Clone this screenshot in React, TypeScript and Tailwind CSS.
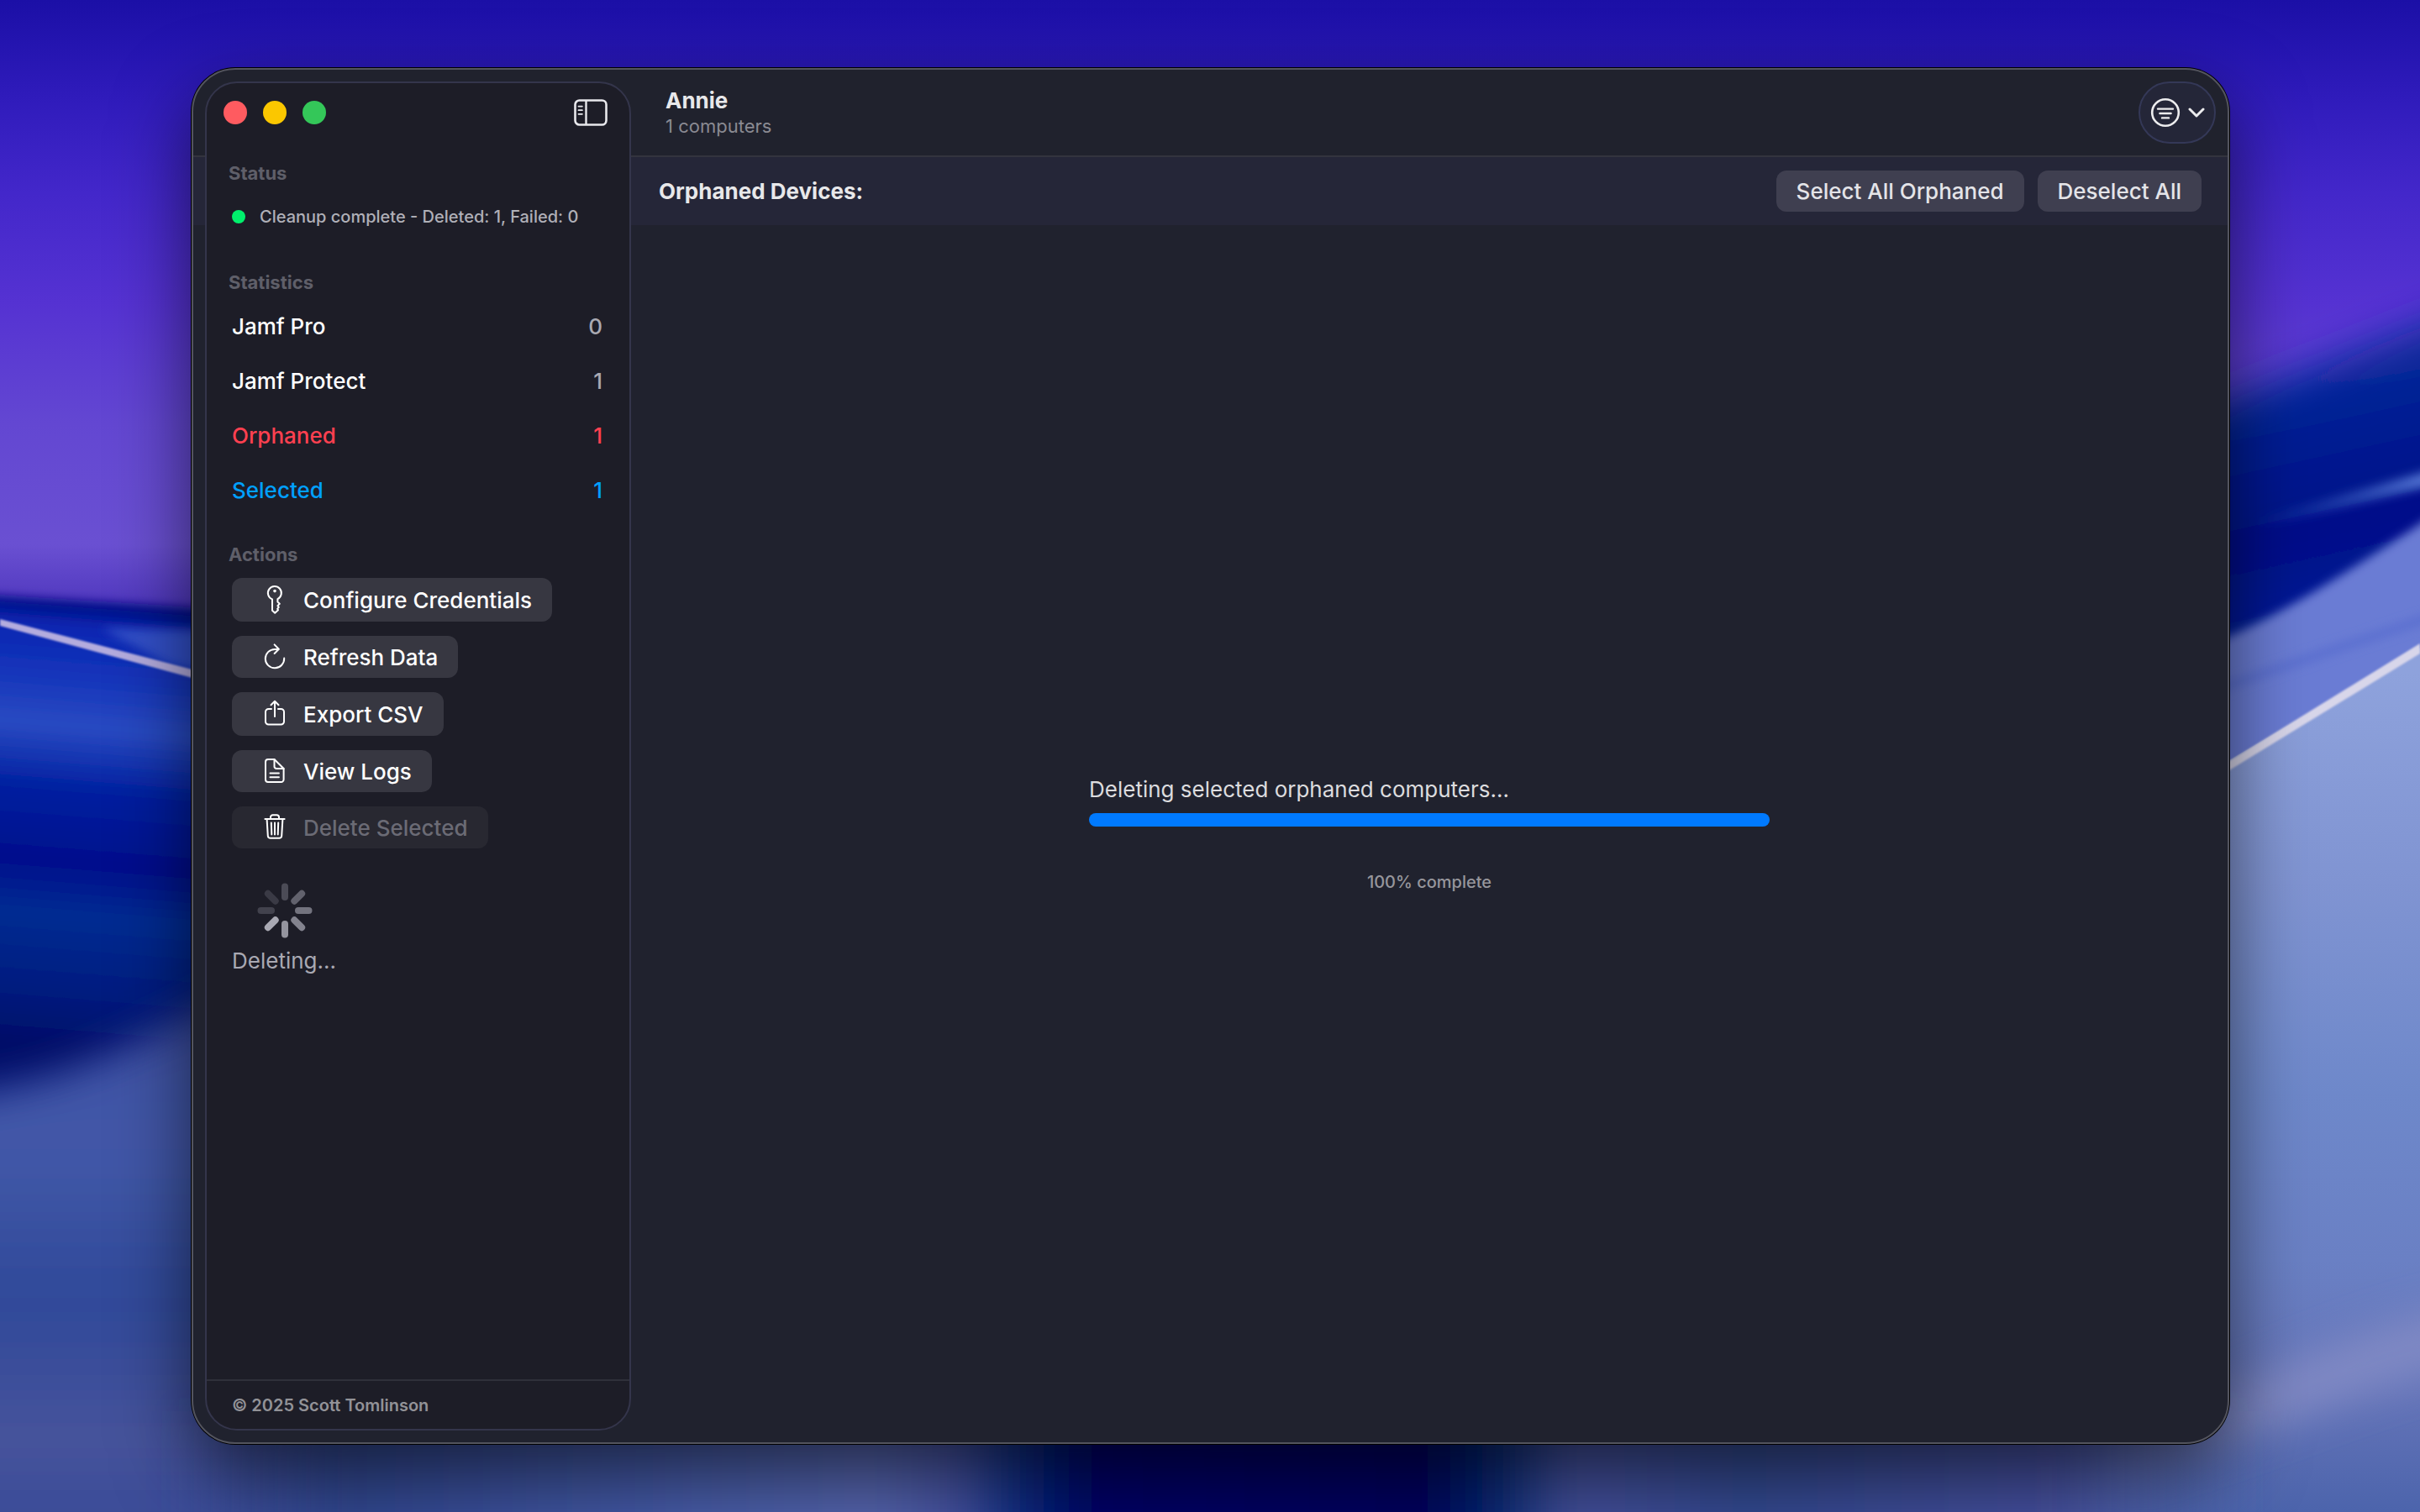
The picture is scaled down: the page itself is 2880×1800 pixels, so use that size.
import React from "react";

interface Stat {
  label: string;
  value: number;
  labelClass: string;
  valueClass: string;
}

interface Action {
  label: string;
  icon: React.ReactNode;
  sizeClass: string;
  disabled?: boolean;
}

const STATS: Stat[] = [
  { label: "Jamf Pro", value: 0, labelClass: "text-white", valueClass: "text-[#a9a9b2]" },
  { label: "Jamf Protect", value: 1, labelClass: "text-white", valueClass: "text-[#a9a9b2]" },
  { label: "Orphaned", value: 1, labelClass: "text-[#ff4050]", valueClass: "text-[#ff4050]" },
  { label: "Selected", value: 1, labelClass: "text-[#00a0ff]", valueClass: "text-[#00a0ff]" },
];

const iconProps = {
  width: 36,
  height: 36,
  viewBox: "0 0 36 36",
  fill: "none",
  stroke: "currentColor",
  strokeWidth: 2,
  strokeLinecap: "round" as const,
  strokeLinejoin: "round" as const,
  "aria-hidden": true,
};

const KeyIcon = () => (
  <svg {...iconProps}>
    <path d="M15 17.400a8 8 0 1 1 6.400-.3v3.400l2.400 2.200-2.400 2.400 1.400 1.800-1.600 1.800.8 1.600-3.800 3.400-3.200-3z" />
    <circle cx="18" cy="7.600" r="1.800" fill="currentColor" stroke="none" />
  </svg>
);

const RefreshIcon = () => (
  <svg {...iconProps}>
    <path d="M22.400 8.900H18.200A11.200 11.200 0 1 0 29.200 19.600" />
    <path d="M17.600 3.400l5.200 5.400-5.200 5.200" />
  </svg>
);

const ShareIcon = () => (
  <svg {...iconProps}>
    <path d="M14 12h-3.400a3.600 3.600 0 0 0-3.600 3.600v11.400a3.600 3.600 0 0 0 3.600 3.600h14.800a3.600 3.600 0 0 0 3.600-3.600V15.600a3.600 3.600 0 0 0-3.600-3.600H22" />
    <path d="M18 21V3M13.500 7.300L18 2.800l4.500 4.500" />
  </svg>
);

const DocIcon = () => (
  <svg {...iconProps}>
    <path d="M17.500 4H10a3 3 0 0 0-3 3v21a3 3 0 0 0 3 3h15.600a3 3 0 0 0 3-3V15z" />
    <path d="M17.500 4v8.400a2.600 2.600 0 0 0 2.600 2.600h8.500M12.500 20.400h10.400M12.500 25.200h10.400" />
  </svg>
);

const TrashIcon = () => (
  <svg {...iconProps}>
    <path d="M6.400 8h23.200M13 7.800V5.800a2.600 2.600 0 0 1 2.600-2.600h4.800A2.600 2.600 0 0 1 23 5.800v2" />
    <path d="M8.600 8.200l1.200 19.800a3 3 0 0 0 3 2.800h10.400a3 3 0 0 0 3-2.800l1.200-19.800" />
    <path d="M13.800 12.400l.5 14M18 12.400v14M22.200 12.400l-.5 14" />
  </svg>
);

const SidebarIcon = () => (
  <svg width="40" height="32" viewBox="0 0 40 32" fill="none" stroke="currentColor" aria-hidden="true">
    <rect x="1.500" y="1.500" width="37" height="29" rx="5" strokeWidth="2.600" />
    <path d="M14.500 2v28" strokeWidth="2.400" />
    <path d="M5.500 8.600h4.400M5.500 13.200h4.400M5.500 17.800h4.400" strokeWidth="1.800" strokeLinecap="round" />
  </svg>
);

const FilterIcon = () => (
  <svg width="36" height="36" viewBox="0 0 36 36" fill="none" stroke="currentColor" strokeLinecap="round" aria-hidden="true">
    <circle cx="18" cy="18" r="15.800" strokeWidth="2.600" />
    <path d="M9 13.600h18M11.400 19h13.200M14 24.400h8" strokeWidth="2.400" />
  </svg>
);

const ChevronIcon = () => (
  <svg width="20" height="12" viewBox="0 0 20 12" fill="none" stroke="currentColor" strokeWidth="3" strokeLinecap="round" strokeLinejoin="round" aria-hidden="true">
    <path d="M2 2l8 8 8-8" />
  </svg>
);

const BLADES = ["#4b4b56", "#62626d", "#73737e", "#83838e", "#94949e", "#a9a9b3", "#42424d", "#3a3a45"];

const Spinner = () => (
  <svg width="66" height="68" viewBox="0 0 66 68" role="img" aria-label="Deleting">
    {BLADES.map((color, i) => (
      <rect key={i} x="29" y="1.500" width="8" height="20.500" rx="4" fill={color} transform={`rotate(${i * 45} 33 34)`} />
    ))}
  </svg>
);

const ACTIONS: Action[] = [
  { label: "Configure Credentials", icon: <KeyIcon />, sizeClass: "h-[52px]" },
  { label: "Refresh Data", icon: <RefreshIcon />, sizeClass: "h-[50px]" },
  { label: "Export CSV", icon: <ShareIcon />, sizeClass: "h-[52px]" },
  { label: "View Logs", icon: <DocIcon />, sizeClass: "h-[50px]" },
  { label: "Delete Selected", icon: <TrashIcon />, sizeClass: "h-[50px]", disabled: true },
];

const Wallpaper = () => (
  <svg
    className="absolute inset-0 h-full w-full"
    viewBox="0 0 2880 1800"
    preserveAspectRatio="none"
    aria-hidden="true"
  >
    <defs>
      <linearGradient id="sky" x1="0" y1="0" x2="0" y2="720" gradientUnits="userSpaceOnUse">
        <stop offset="0" stopColor="#1b0fa6" />
        <stop offset="0.16" stopColor="#2f1bbb" />
        <stop offset="0.32" stopColor="#4327ca" />
        <stop offset="0.5" stopColor="#5532d2" />
        <stop offset="0.7" stopColor="#6347d2" />
        <stop offset="0.9" stopColor="#6a50d2" />
        <stop offset="1" stopColor="#5038be" />
      </linearGradient>
      <linearGradient id="leftSea" x1="20" y1="710" x2="-30" y2="1330" gradientUnits="userSpaceOnUse">
        <stop offset="0" stopColor="#000c80" />
        <stop offset="0.05" stopColor="#0a26b2" />
        <stop offset="0.14" stopColor="#1434ba" />
        <stop offset="0.24" stopColor="#2a4ac2" />
        <stop offset="0.36" stopColor="#0020a0" />
        <stop offset="0.5" stopColor="#000e8c" />
        <stop offset="0.6" stopColor="#042c92" />
        <stop offset="0.74" stopColor="#001c80" />
        <stop offset="0.86" stopColor="#000c66" />
        <stop offset="1" stopColor="#001070" />
      </linearGradient>
      <linearGradient id="leftLow" x1="0" y1="1200" x2="0" y2="1800" gradientUnits="userSpaceOnUse">
        <stop offset="0" stopColor="#3f50a4" />
        <stop offset="0.28" stopColor="#4258a8" />
        <stop offset="0.58" stopColor="#2f4999" />
        <stop offset="0.86" stopColor="#47539b" />
        <stop offset="1" stopColor="#3a4c98" />
      </linearGradient>
      <linearGradient id="rightSea" x1="2700" y1="400" x2="2770" y2="720" gradientUnits="userSpaceOnUse">
        <stop offset="0" stopColor="#1034a0" />
        <stop offset="0.4" stopColor="#001c92" />
        <stop offset="0.75" stopColor="#000e88" />
        <stop offset="1" stopColor="#001a96" />
      </linearGradient>
      <linearGradient id="streak" x1="2680" y1="0" x2="2880" y2="0" gradientUnits="userSpaceOnUse">
        <stop offset="0" stopColor="#2448b4" stopOpacity="0" />
        <stop offset="1" stopColor="#5070d0" />
      </linearGradient>
      <linearGradient id="rightLow" x1="0" y1="800" x2="0" y2="1800" gradientUnits="userSpaceOnUse">
        <stop offset="0" stopColor="#8ea2dc" />
        <stop offset="0.25" stopColor="#8094d2" />
        <stop offset="0.5" stopColor="#6e88ca" />
        <stop offset="0.7" stopColor="#6a80c4" />
        <stop offset="0.86" stopColor="#6474b8" />
        <stop offset="1" stopColor="#4c64ac" />
      </linearGradient>
      <linearGradient id="bottom" x1="0" y1="0" x2="2880" y2="0" gradientUnits="userSpaceOnUse">
        <stop offset="0.07" stopColor="#3a4e9c" stopOpacity="0" />
        <stop offset="0.14" stopColor="#30468f" />
        <stop offset="0.28" stopColor="#455aa6" />
        <stop offset="0.36" stopColor="#5464ac" />
        <stop offset="0.395" stopColor="#44509e" />
        <stop offset="0.42" stopColor="#0a2c80" />
        <stop offset="0.45" stopColor="#000566" />
        <stop offset="0.59" stopColor="#00045c" />
        <stop offset="0.62" stopColor="#082a74" />
        <stop offset="0.65" stopColor="#44509a" />
        <stop offset="0.72" stopColor="#32488f" />
        <stop offset="0.85" stopColor="#454f9c" />
        <stop offset="0.93" stopColor="#4c64ac" stopOpacity="0" />
      </linearGradient>
      <filter id="soft" x="-20%" y="-20%" width="140%" height="140%">
        <feGaussianBlur stdDeviation="24" />
      </filter>
      <filter id="edge" x="-20%" y="-20%" width="140%" height="140%">
        <feGaussianBlur stdDeviation="6" />
      </filter>
      <filter id="hair" x="-20%" y="-20%" width="140%" height="140%">
        <feGaussianBlur stdDeviation="1.2" />
      </filter>
    </defs>

    <rect width="2880" height="1800" fill="url(#sky)" />

    {/* left waves */}
    <path d="M-60 706L300 728V1500H-60z" fill="url(#leftSea)" filter="url(#edge)" />
    <path d="M120 748L300 752V812L200 790z" fill="#3350c8" filter="url(#edge)" />
    <path d="M-80 1306C80 1294 160 1240 340 1150H1440V1960H-80z" fill="url(#leftLow)" filter="url(#soft)" />
    <path d="M0 737L240 800V810L0 745z" fill="#b4acde" filter="url(#hair)" />

    {/* right waves */}
    <path d="M2560 510L2960 360V900H2560z" fill="url(#rightSea)" filter="url(#soft)" />
    <path d="M2640 630L2900 558V576L2640 640z" fill="url(#streak)" filter="url(#edge)" />
    <path d="M2560 790C2680 760 2780 690 2940 584V1000H2560z" fill="#6a7cd4" filter="url(#edge)" />
    <path d="M2640 814L2900 726V738L2640 826z" fill="#5c70d0" filter="url(#edge)" />
    <path d="M1440 1700L2560 960L2960 724V1900H1440z" fill="url(#rightLow)" />
    <path d="M2500 1710C2700 1650 2800 1560 3080 1530V1600C2840 1620 2740 1700 2500 1760z" fill="#8089c4" filter="url(#soft)" />
    <path d="M2640 914L2880 766V778L2640 925z" fill="#d8d6ea" filter="url(#hair)" />

    <rect y="1680" width="2880" height="320" fill="url(#bottom)" filter="url(#soft)" />
  </svg>
);

const Sidebar = () => (
  <aside className="m-[14px] mr-0 flex w-[507px] shrink-0 flex-col overflow-hidden rounded-[38px] border-2 border-[#34354b] bg-[#1d1d27]">
    <div className="flex h-[70px] shrink-0 items-center justify-between pl-5 pr-[26px]">
      <div className="flex gap-[19px]">
        <button type="button" aria-label="Close" className="size-7 rounded-full bg-[#ff5b60]" />
        <button type="button" aria-label="Minimize" className="size-7 rounded-full bg-[#fbc700]" />
        <button type="button" aria-label="Zoom" className="size-7 rounded-full bg-[#34c759]" />
      </div>
      <button type="button" aria-label="Toggle sidebar" className="text-[#e8e8ec]">
        <SidebarIcon />
      </button>
    </div>

    <div className="flex flex-1 flex-col px-[26px] pt-[23px]">
      <h2 className="text-[22px] leading-7 font-bold text-[#5f5f69]">Status</h2>
      <div className="mt-6 flex items-center gap-[17px] pl-1 text-[20px] leading-7 font-medium text-[#b0b0b8]">
        <span className="size-4 rounded-full bg-[#00f06c]" />
        Cleanup complete - Deleted: 1, Failed: 0
      </div>

      <h2 className="mt-[50px] text-[22px] leading-7 font-bold text-[#5f5f69]">Statistics</h2>
      <dl className="mt-[6px] pr-[6px] pl-1 text-[26px] font-medium">
        {STATS.map((s) => (
          <div key={s.label} className="flex h-[65px] items-center justify-between">
            <dt className={s.labelClass}>{s.label}</dt>
            <dd className={s.valueClass}>{s.value}</dd>
          </div>
        ))}
      </dl>

      <h2 className="mt-[30px] text-[22px] leading-7 font-bold text-[#5f5f69]">Actions</h2>
      <div className="mt-[14px] flex flex-col items-start gap-[17px] pl-1">
        {ACTIONS.map((a) => (
          <button
            key={a.label}
            type="button"
            disabled={a.disabled}
            className={`flex items-center gap-4 rounded-xl pr-6 pl-[33px] text-[26px] font-medium ${a.sizeClass} ${
              a.disabled ? "bg-[#282831]" : "bg-[#373741]"
            }`}
          >
            <span className="text-white">{a.icon}</span>
            <span className={a.disabled ? "text-[#6b6b75]" : "text-white"}>{a.label}</span>
          </button>
        ))}
      </div>

      <div className="mt-10 pl-1">
        <div className="pl-[30px]">
          <Spinner />
        </div>
        <p className="mt-[10px] text-[26px] leading-8 text-[#a9a9b3]">Deleting...</p>
      </div>
    </div>

    <footer className="flex h-[59px] shrink-0 items-center border-t-2 border-[#2f303a] pl-[30px] text-[20px] font-semibold text-[#929297]">
      © 2025 Scott Tomlinson
    </footer>
  </aside>
);

const Main = () => (
  <main className="flex flex-1 flex-col">
    <header className="mb-0.5 flex h-[102px] items-center justify-between pr-[14px] pl-[41px]">
      <div className="pt-0.5">
        <h1 className="text-[26px] leading-[30px] font-bold text-[#e8e8ea]">Annie</h1>
        <p className="text-[22px] leading-[30px] text-[#8a8a92]">1 computers</p>
      </div>
      <button
        type="button"
        aria-label="Filter"
        className="flex h-[74px] w-[92px] items-center justify-center gap-[9px] rounded-full border-2 border-[#343857] bg-[#242638] text-[#ececee]"
      >
        <FilterIcon />
        <ChevronIcon />
      </button>
    </header>

    <div className="flex h-[81px] items-center justify-between pr-[31px] pl-[33px]">
      <h2 className="text-[26px] font-bold text-[#e8e8ea]">Orphaned Devices:</h2>
      <div className="flex gap-4 text-[26px] font-medium text-[#e4e4e8]">
        <button type="button" className="h-[49px] rounded-xl bg-[#3f3f50] px-6">
          Select All Orphaned
        </button>
        <button type="button" className="h-[49px] rounded-xl bg-[#3f3f50] px-6">
          Deselect All
        </button>
      </div>
    </div>

    <div className="flex flex-1 flex-col items-center justify-center pt-[3px]">
      <div className="flex w-[810px] max-w-full flex-col">
        <label htmlFor="deletion" className="text-[26px] leading-8 text-[#dcdcde]">
          Deleting selected orphaned computers...
        </label>
        <progress
          id="deletion"
          max={100}
          value={100}
          className="mt-3 h-4 w-full appearance-none overflow-hidden rounded-full [&::-webkit-progress-bar]:bg-[#373741] [&::-webkit-progress-value]:bg-[#007aff]"
        />
        <p className="mt-[52px] text-center text-[20px] leading-7 font-medium text-[#96969c]">100% complete</p>
      </div>
    </div>
  </main>
);

const App: React.FC = () => (
  <div className="relative flex min-h-screen flex-col pt-[81px] pr-[227px] pb-[81px] pl-[228px] font-['Inter','Liberation_Sans',sans-serif]">
    <Wallpaper />
    {/* the title bar and toolbar bands run behind the floating sidebar */}
    <div className="relative flex flex-1 overflow-hidden rounded-[52px] border-2 border-[#53545e] bg-[#20222e] bg-[linear-gradient(#20222d_0_102px,#33343e_102px_104px,#252638_104px_185px,#20222e_185px)] shadow-[0_0_0_1px_#000,0_36px_90px_rgba(0,0,0,0.6)]">
      <Sidebar />
      <Main />
    </div>
  </div>
);

export default App;
